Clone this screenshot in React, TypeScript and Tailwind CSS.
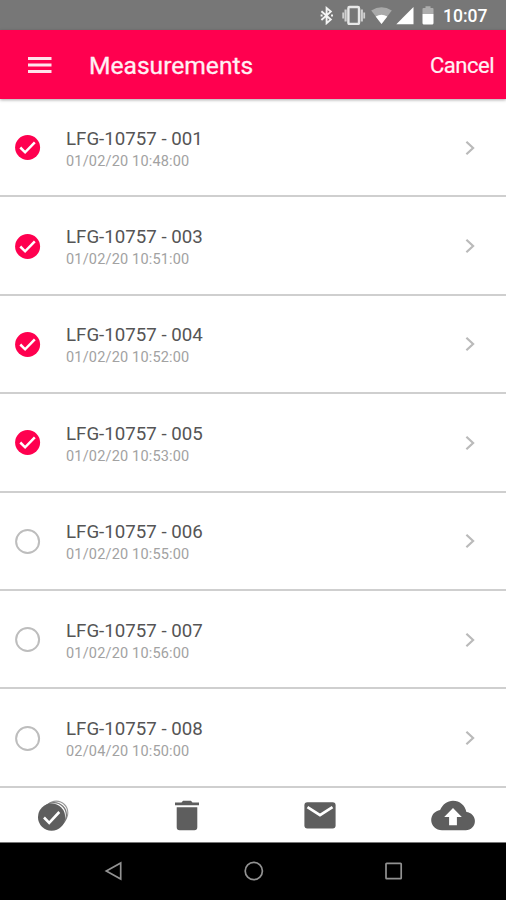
import React from "react";

const rows = [
  { name: "LFG-10757 - 001", date: "01/02/20 10:48:00", selected: true },
  { name: "LFG-10757 - 003", date: "01/02/20 10:51:00", selected: true },
  { name: "LFG-10757 - 004", date: "01/02/20 10:52:00", selected: true },
  { name: "LFG-10757 - 005", date: "01/02/20 10:53:00", selected: true },
  { name: "LFG-10757 - 006", date: "01/02/20 10:55:00", selected: false },
  { name: "LFG-10757 - 007", date: "01/02/20 10:56:00", selected: false },
  { name: "LFG-10757 - 008", date: "02/04/20 10:50:00", selected: false },
];

function StatusBar() {
  return (
    <div className="flex h-[30px] shrink-0 items-center justify-end bg-[#777777] pr-[18px] text-white">
      <svg className="mr-[8px] h-5 w-[14px]" viewBox="0 0 14 20" fill="none" stroke="#f4f4f4" strokeWidth="1.9">
        <path d="M1.4 6.2 L10.8 14.6 L6.6 18.2 V3 L10.8 6.6 L1.4 15" />
        <path d="M.6 10.6h2M11 10.6h2" strokeWidth="2" />
      </svg>
      <svg className="mr-[5px] h-5 w-6" viewBox="0 0 24 20" fill="none" stroke="#e8e8e8">
        <rect x="6.4" y="2" width="10.6" height="17" rx="1.2" strokeWidth="2.4" />
        <path d="M3.6 4.5v12M19.8 4.5v12" strokeWidth="2.2" stroke="#cfcfcf" />
        <path d="M1.2 7.5v6M22.2 7.5v6" strokeWidth="1.8" stroke="#cfcfcf" />
      </svg>
      <svg className="mr-[4px] h-5 w-[21px]" viewBox="0 0 21 20">
        <path d="M.2 5.4 Q10.5 -1 20.8 5.4 L10.5 19Z" fill="#a9a9a9" />
        <path d="M4.7 11.4 Q10.5 8.2 16.3 11.4 L10.5 19Z" fill="#fff" />
      </svg>
      <svg className="mr-[8px] h-5 w-[18px]" viewBox="0 0 18 20">
        <path d="M17.5 2V19.2H.3Z" fill="#fff" />
      </svg>
      <svg className="mr-[9px] h-5 w-3" viewBox="0 0 12 20">
        <path d="M1.5 3h2V1.2h5V3h2q1 0 1 1v5H.5V4q0-1 1-1Z" fill="#adadad" />
        <path d="M.5 9h11v9q0 1.4-1 1.4h-9q-1 0-1-1.4Z" fill="#fff" />
      </svg>
      <span className="mt-[2px] w-[45px] whitespace-nowrap text-[17.5px] leading-[30px] font-medium">10:07</span>
    </div>
  );
}

function SelectMark({ selected }: { selected: boolean }) {
  return (
    <svg className="mt-px ml-[14px] h-[27px] w-[27px] shrink-0" viewBox="0 0 27 27" fill="none">
      {selected ? (
        <>
          <circle cx="13.6" cy="13.5" r="12.5" fill="#ff004f" />
          <path d="M6.3 13.5l4.8 4.8 9.7-10" stroke="#fff" strokeWidth="2.5" />
        </>
      ) : (
        <circle cx="13.6" cy="13.5" r="11.5" stroke="#bdbdbd" strokeWidth="2" />
      )}
    </svg>
  );
}

export default function App() {
  return (
    <div className="flex h-[900px] w-[506px] flex-col overflow-hidden bg-white font-['Roboto',sans-serif]">
      <StatusBar />
      <header className="z-10 flex h-[68.5px] shrink-0 items-center bg-[#ff004f] pr-[12px] pl-[28px] text-[#fff0f4] shadow-[0_1px_3px_rgba(0,0,0,0.35)]">
        <svg className="mt-px h-[18px] w-[24px]" viewBox="0 0 24 18" fill="#ffe3ec">
          <path d="M0 1h23.5v3H0zM0 7.5h23.5v3H0zM0 14h23.5v3H0z" />
        </svg>
        <h1 className="mt-[5px] ml-[37px] text-[24.6px] [-webkit-text-stroke:0.3px_#fff0f4]">Measurements</h1>
        <button className="mt-[3px] ml-auto text-[22px] tracking-[-0.5px] [-webkit-text-stroke:0.2px_#fff0f4]">Cancel</button>
      </header>

      <ul className="shrink-0 pt-[0.5px]">
        {rows.map((row) => (
          <li key={row.name} className="flex h-[98.4px] items-center border-b-2 border-[#cfcfcf]">
            <SelectMark selected={row.selected} />
            <div className="mt-[4px] ml-[25px]">
              <div className="text-[18.7px] leading-[24px] text-[#555555]">{row.name}</div>
              <div className="text-[14.5px] leading-[21px] tracking-[0.18px] text-[#a2a2a2]">{row.date}</div>
            </div>
            <svg className="mt-px mr-[30px] ml-auto h-4 w-3" viewBox="0 0 12 16" fill="none">
              <path d="M2.4 1.7L9.1 8 2.4 14.3" stroke="#bababa" strokeWidth="2.2" />
            </svg>
          </li>
        ))}
      </ul>

      <div className="flex min-h-0 flex-1 items-center pt-[2px]">
        <svg className="ml-[37px] h-8 w-8" viewBox="0 0 32 32" fill="none">
          <circle cx="19.2" cy="12.7" r="11.6" fill="#fff" stroke="#999" strokeWidth="1.1" />
          <circle cx="17" cy="15" r="12.4" fill="#fff" stroke="#777" strokeWidth="1.3" />
          <circle cx="14.6" cy="17.2" r="13.6" fill="#5e5e5e" />
          <path d="M7 17.5l5.2 5.3L22.3 12" stroke="#fff" strokeWidth="2.6" />
        </svg>
        <svg className="ml-[106px] h-8 w-6" viewBox="0 0 24 32" fill="#5e5e5e">
          <path d="M0 2.5h6.5l1.6-1.7h7.8l1.6 1.7H24v2.8H0zM1.7 7.2h20.6v20.1q0 2.9-2.9 2.9H4.6q-2.9 0-2.9-2.9z" />
        </svg>
        <svg className="ml-[105px] h-8 w-8" viewBox="0 0 32 32">
          <rect x=".4" y="2.2" width="31.2" height="26.3" rx="3" fill="#5e5e5e" />
          <path d="M3.5 7.1L16 15.1 28.5 7.1" fill="none" stroke="#fff" strokeWidth="2.8" />
        </svg>
        <svg className="ml-[95px] h-8 w-11" viewBox="0 0 44 32">
          <path d="M11 30.2C5 30.2.2 25.7.2 20c0-5.2 3.9-9.4 8.9-10.1C11.6 4.4 16.4.7 22 .7c6.7 0 12.3 4.8 13.4 11.2 4.8.4 8.5 4.3 8.5 9.1 0 5.2-4 9.2-9.1 9.2Z" fill="#5e5e5e" />
          <path d="M22 8l8.8 9.1h-4.9v8.2h-7.8v-8.2h-4.9Z" fill="#fff" />
        </svg>
      </div>

      <nav className="flex h-[58px] shrink-0 items-center border-t border-[#777] bg-black pb-px">
        <svg className="ml-[104px] h-5 w-5" viewBox="0 0 20 20" fill="none" stroke="#929292" strokeWidth="1.7">
          <path d="M16.7 2v16L2.3 10Z" />
        </svg>
        <svg className="ml-[120px] h-5 w-5" viewBox="0 0 20 20" fill="none" stroke="#929292" strokeWidth="1.7">
          <circle cx="9.8" cy="10" r="8.6" />
        </svg>
        <svg className="ml-[120px] h-5 w-5" viewBox="0 0 20 20" fill="none" stroke="#929292" strokeWidth="1.7">
          <rect x="2" y="2.3" width="15.2" height="15.4" rx=".7" />
        </svg>
      </nav>
    </div>
  );
}
